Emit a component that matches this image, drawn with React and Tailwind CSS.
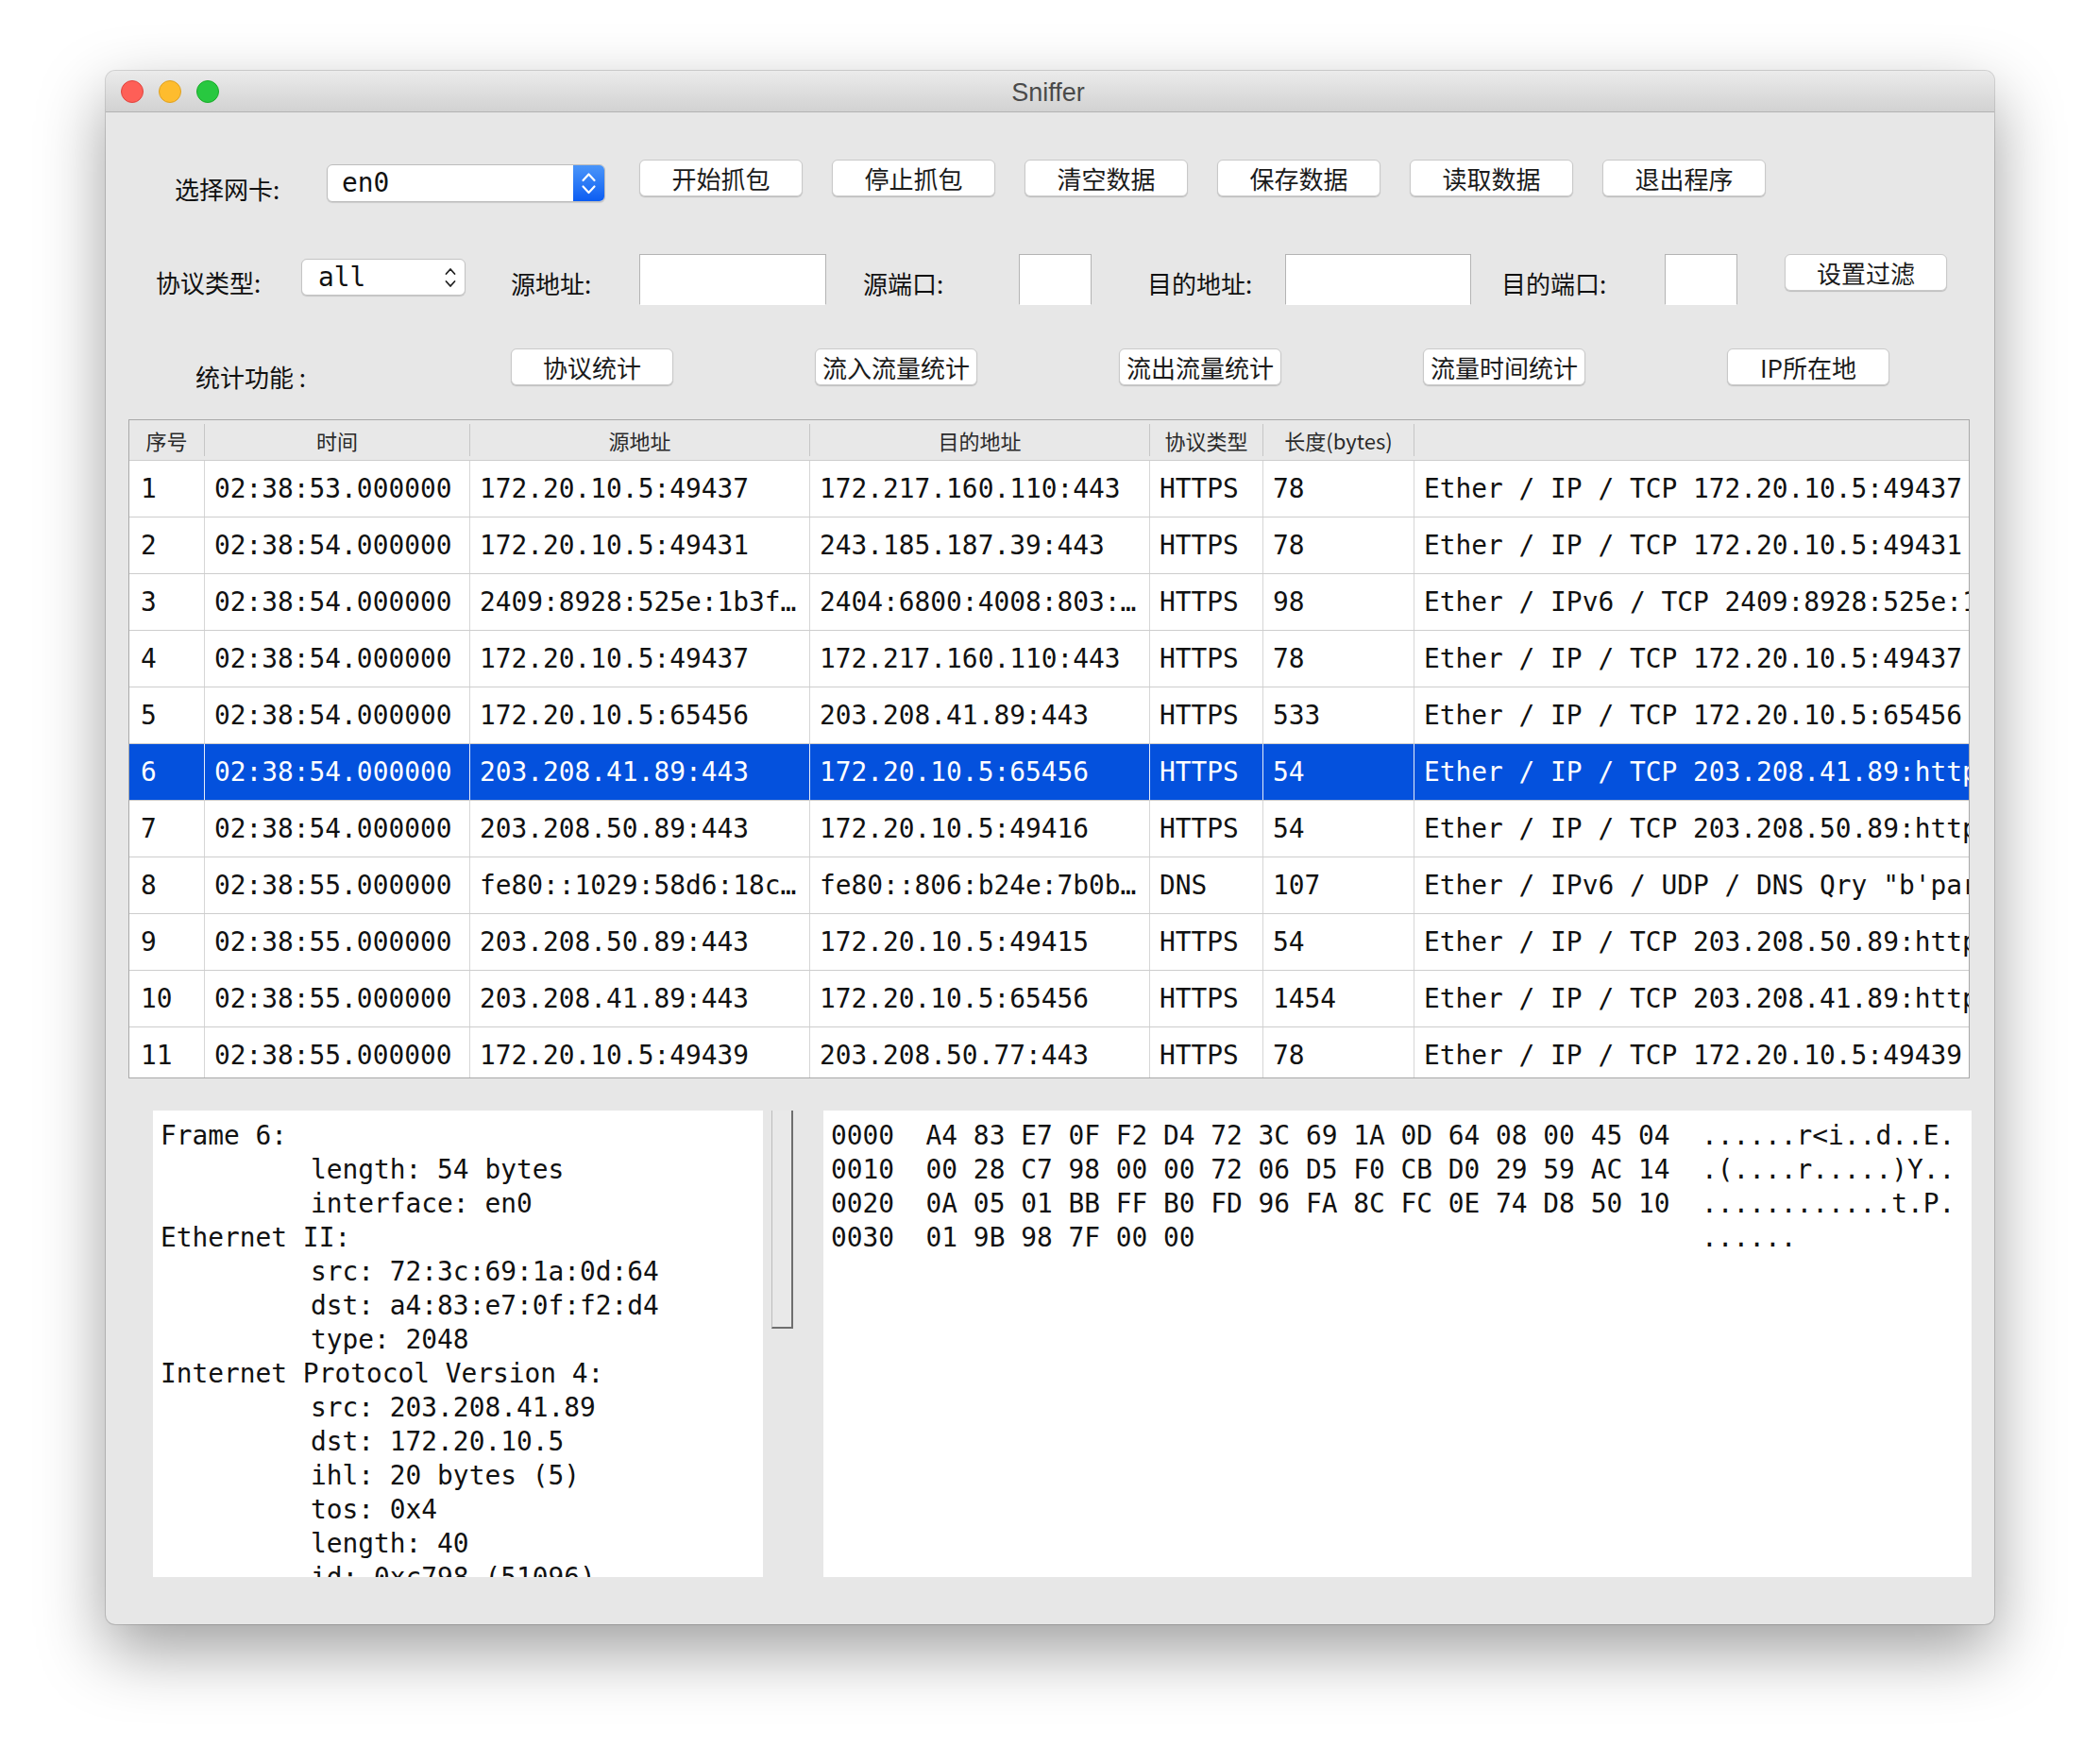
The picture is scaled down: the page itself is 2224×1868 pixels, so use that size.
import React from "react";

const MONO = "font-['DejaVu_Sans_Mono',monospace]";
const CJK = "font-['Noto_Sans_CJK_SC',sans-serif]";

function Btn({ children, w = "w-[173px]", className = "" }) {
  return (
    <div
      className={`${w} h-[39px] shrink-0 bg-white border border-[#c9c9c9] rounded-[6px] shadow-[0_1px_1px_rgba(0,0,0,0.18)] flex items-center justify-center text-[26px] leading-none text-[#1b1b1b] ${CJK} ${className}`}
    >
      {children}
    </div>
  );
}

function Label({ children, className = "" }) {
  return (
    <div className={`shrink-0 flex items-center text-[26px] leading-none text-[#111] ${CJK} ${className}`}>
      {children}
    </div>
  );
}

function TextBox({ w }) {
  return <div className={`${w} h-[54px] shrink-0 bg-white border border-[#b4b4b4] border-b-white`} />;
}

const rows = [
  ["1", "02:38:53.000000", "172.20.10.5:49437", "172.217.160.110:443", "HTTPS", "78", "Ether / IP / TCP 172.20.10.5:49437 > 172.217.160.110:https A"],
  ["2", "02:38:54.000000", "172.20.10.5:49431", "243.185.187.39:443", "HTTPS", "78", "Ether / IP / TCP 172.20.10.5:49431 > 243.185.187.39:https A"],
  ["3", "02:38:54.000000", "2409:8928:525e:1b3f…", "2404:6800:4008:803:…", "HTTPS", "98", "Ether / IPv6 / TCP 2409:8928:525e:1b3f:a1c2:ff3e:9a10:2b7c:49432 > 2404:6800:4008:803::200e:https A"],
  ["4", "02:38:54.000000", "172.20.10.5:49437", "172.217.160.110:443", "HTTPS", "78", "Ether / IP / TCP 172.20.10.5:49437 > 172.217.160.110:https A"],
  ["5", "02:38:54.000000", "172.20.10.5:65456", "203.208.41.89:443", "HTTPS", "533", "Ether / IP / TCP 172.20.10.5:65456 > 203.208.41.89:https PA / Raw"],
  ["6", "02:38:54.000000", "203.208.41.89:443", "172.20.10.5:65456", "HTTPS", "54", "Ether / IP / TCP 203.208.41.89:https > 172.20.10.5:65456 A"],
  ["7", "02:38:54.000000", "203.208.50.89:443", "172.20.10.5:49416", "HTTPS", "54", "Ether / IP / TCP 203.208.50.89:https > 172.20.10.5:49416 A"],
  ["8", "02:38:55.000000", "fe80::1029:58d6:18c…", "fe80::806:b24e:7b0b…", "DNS", "107", "Ether / IPv6 / UDP / DNS Qry \"b'par.local.'\""],
  ["9", "02:38:55.000000", "203.208.50.89:443", "172.20.10.5:49415", "HTTPS", "54", "Ether / IP / TCP 203.208.50.89:https > 172.20.10.5:49415 A"],
  ["10", "02:38:55.000000", "203.208.41.89:443", "172.20.10.5:65456", "HTTPS", "1454", "Ether / IP / TCP 203.208.41.89:https > 172.20.10.5:65456 A / Raw"],
  ["11", "02:38:55.000000", "172.20.10.5:49439", "203.208.50.77:443", "HTTPS", "78", "Ether / IP / TCP 172.20.10.5:49439 > 203.208.50.77:https S"],
];

const headers = ["序号", "时间", "源地址", "目的地址", "协议类型", "长度(bytes)", ""];
const GRID = "grid grid-cols-[79px_281px_360px_360px_120px_160px_1fr]";

const detail = [
  [0, "Frame 6:"],
  [1, "length: 54 bytes"],
  [1, "interface: en0"],
  [0, "Ethernet II:"],
  [1, "src: 72:3c:69:1a:0d:64"],
  [1, "dst: a4:83:e7:0f:f2:d4"],
  [1, "type: 2048"],
  [0, "Internet Protocol Version 4:"],
  [1, "src: 203.208.41.89"],
  [1, "dst: 172.20.10.5"],
  [1, "ihl: 20 bytes (5)"],
  [1, "tos: 0x4"],
  [1, "length: 40"],
  [1, "id: 0xc798 (51096)"],
  [1, "flags: "],
  [1, "frag: 0"],
];

const hex = [
  "0000  A4 83 E7 0F F2 D4 72 3C 69 1A 0D 64 08 00 45 04  ......r<i..d..E.",
  "0010  00 28 C7 98 00 00 72 06 D5 F0 CB D0 29 59 AC 14  .(....r.....)Y..",
  "0020  0A 05 01 BB FF B0 FD 96 FA 8C FC 0E 74 D8 50 10  ............t.P.",
  "0030  01 9B 98 7F 00 00                                ......",
];

export default function App() {
  return (
    <div className="w-[2224px] h-[1868px] bg-white pt-[75px] pl-[112px]">
      <div className="w-[2000px] h-[1645px] bg-[#e7e7e7] rounded-[10px] shadow-[0_0_0_1px_rgba(0,0,0,0.14),0_28px_70px_rgba(0,0,0,0.38)] flex flex-col overflow-hidden">
        {/* Title bar */}
        <div className="h-[44px] shrink-0 bg-gradient-to-b from-[#ebebeb] to-[#d2d2d2] border-b border-[#b2b2b2] flex items-center relative">
          <div className="flex items-center gap-[16px] pl-[16px]">
            <div className="w-[24px] h-[24px] rounded-full bg-[#fe5f57] border border-[#e0443e]" />
            <div className="w-[24px] h-[24px] rounded-full bg-[#febc2e] border border-[#dea123]" />
            <div className="w-[24px] h-[24px] rounded-full bg-[#28c840] border border-[#1aab29]" />
          </div>
          <div className="flex-1 text-center pr-[124px] pt-[4px] text-[27px] text-[#4a4a4a] font-['Liberation_Sans',sans-serif]">
            Sniffer
          </div>
        </div>

        {/* Row 1 */}
        <div className="mt-[50px] h-[45px] flex items-start">
          <Label className="ml-[73px] w-[161px] h-[40px] mt-[11px]">选择网卡:</Label>
          <div className="mt-[5px] w-[295px] h-[40px] shrink-0 flex bg-white border border-[#bdbdbd] rounded-[6px] shadow-[0_1px_1px_rgba(0,0,0,0.12)] overflow-hidden">
            <div className={`flex-1 flex items-center pl-[15px] text-[27.85px] text-[#111] ${MONO}`}>en0</div>
            <div className="w-[33px] h-full bg-gradient-to-b from-[#4a95f9] to-[#0a5cf2] flex items-center justify-center">
              <svg width="33" height="40" viewBox="0 0 33 40" fill="none" stroke="white" strokeWidth="2.2" strokeLinecap="round" strokeLinejoin="round">
                <path d="M10.5 17 L16.5 10.5 L22.5 17" />
                <path d="M10.5 23.5 L16.5 30 L22.5 23.5" />
              </svg>
            </div>
          </div>
          <div className="ml-[36px] flex gap-[31px]">
            <Btn>开始抓包</Btn>
            <Btn>停止抓包</Btn>
            <Btn>清空数据</Btn>
            <Btn>保存数据</Btn>
            <Btn>读取数据</Btn>
            <Btn>退出程序</Btn>
          </div>
        </div>

        {/* Row 2 */}
        <div className="mt-[55px] h-[54px] flex items-start">
          <Label className="ml-[53px] w-[154px] h-[54px] pt-[6px]">协议类型:</Label>
          <div className="mt-[5px] w-[174px] h-[39px] shrink-0 flex items-center bg-white border border-[#c4c4c4] rounded-[6px] shadow-[0_1px_1px_rgba(0,0,0,0.15)]">
            <div className={`flex-1 pl-[17px] text-[27.85px] leading-none text-[#111] ${MONO}`}>all</div>
            <svg className="mr-[8px]" width="14" height="26" viewBox="0 0 14 26" fill="none" stroke="#222" strokeWidth="1.8" strokeLinecap="round" strokeLinejoin="round">
              <path d="M2.5 9 L7 4 L11.5 9" />
              <path d="M2.5 17 L7 22 L11.5 17" />
            </svg>
          </div>
          <Label className="ml-[48px] w-[136px] h-[54px] pt-[8px]">源地址:</Label>
          <TextBox w="w-[198px]" />
          <Label className="ml-[39px] w-[165px] h-[54px] pt-[8px]">源端口:</Label>
          <TextBox w="w-[77px]" />
          <Label className="ml-[59px] w-[146px] h-[54px] pt-[8px]">目的地址:</Label>
          <TextBox w="w-[197px]" />
          <Label className="ml-[32px] w-[173px] h-[54px] pt-[8px]">目的端口:</Label>
          <TextBox w="w-[77px]" />
          <Btn w="w-[172px]" className="ml-[50px]">设置过滤</Btn>
        </div>

        {/* Row 3 */}
        <div className="mt-[46px] h-[39px] flex items-start">
          <Label className="ml-[95px] w-[334px] h-[39px] mt-[10px]">统计功能 :</Label>
          <div className="flex gap-[150px]">
            <Btn w="w-[172px]">协议统计</Btn>
            <Btn w="w-[172px]">流入流量统计</Btn>
            <Btn w="w-[172px]">流出流量统计</Btn>
            <Btn w="w-[172px]">流量时间统计</Btn>
            <Btn w="w-[172px]">IP所在地</Btn>
          </div>
        </div>

        {/* Table */}
        <div className="mt-[36px] ml-[24px] w-[1950px] h-[698px] shrink-0 border border-[#a9a9a9] bg-white overflow-hidden">
          <div className={`${GRID} h-[42px] bg-[#e8e8e8]`}>
            {headers.map((h, i) => (
              <div key={i} className="flex items-center h-full">
                {i > 0 && <div className="w-px h-[34px] bg-[#c6c6c6]" />}
                <div className={`flex-1 text-center text-[22px] leading-none text-[#2a2a2a] ${CJK}`}>{h}</div>
              </div>
            ))}
          </div>
          {rows.map((r, ri) => {
            const sel = ri === 5;
            return (
              <div
                key={ri}
                className={`${GRID} h-[60px] border-t border-[#cdcdcd] ${sel ? "bg-[#0451dd] text-white" : "bg-white text-[#111]"}`}
              >
                {r.map((c, ci) => (
                  <div
                    key={ci}
                    className={`h-full flex items-center overflow-hidden whitespace-nowrap text-[27.85px] leading-none ${MONO} ${
                      ci === 0 ? "pl-[12px]" : "pl-[10px]"
                    } ${ci > 0 ? (sel ? "border-l border-[#e6ecf8]" : "border-l border-[#d6d6d6]") : ""}`}
                  >
                    {c}
                  </div>
                ))}
              </div>
            );
          })}
        </div>

        {/* Bottom panels */}
        <div className="mt-[34px] h-[494px] flex items-start">
          <div className={`ml-[50px] w-[646px] h-[494px] shrink-0 bg-white overflow-hidden pl-[8px] pt-[9px] text-[27.85px] leading-[36px] text-[#111] ${MONO}`}>
            {detail.map(([ind, t], i) => (
              <div key={i} className={`whitespace-pre ${ind ? "pl-[159px]" : ""}`}>
                {t}
              </div>
            ))}
          </div>
          <div className="ml-[9px] w-[23px] h-[231px] shrink-0 bg-[#e9e9e9] border-l border-[#bdbdbd] border-r-2 border-b-2 border-r-[#6f6f6f] border-b-[#6f6f6f]" />
          <div className={`ml-[32px] w-[1216px] h-[494px] shrink-0 bg-white overflow-hidden pl-[8px] pt-[9px] text-[27.85px] leading-[36px] text-[#111] ${MONO}`}>
            {hex.map((t, i) => (
              <div key={i} className="whitespace-pre">
                {t}
              </div>
            ))}
          </div>
        </div>
      </div>
    </div>
  );
}
